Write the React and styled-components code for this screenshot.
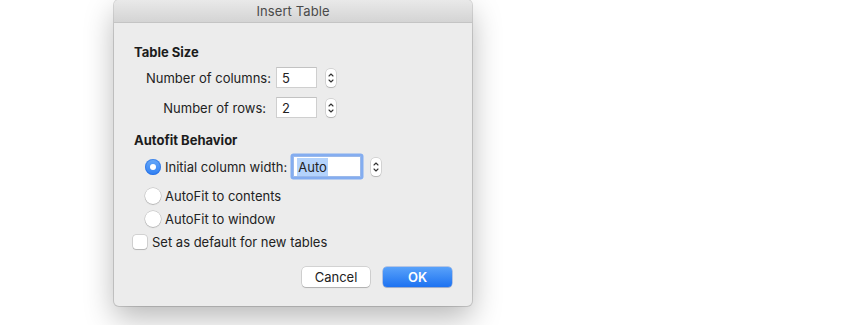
import React from "react";
import styled, { createGlobalStyle } from "styled-components";

const Global = createGlobalStyle`
  html, body { margin: 0; padding: 0; background: #fff; }
  body { font-family: "Inter", "Liberation Sans", sans-serif; -webkit-font-smoothing: antialiased; }
`;

const Page = styled.div`
  width: 850px;
  height: 325px;
  overflow: hidden;
  padding-left: 114px;
  box-sizing: border-box;
`;

const Dialog = styled.div`
  width: 358px;
  height: 306px;
  background: #ececec;
  border-radius: 5px;
  box-shadow: 0 0 0 1px rgba(0, 0, 0, 0.14), 0 12px 30px rgba(0, 0, 0, 0.28);
  display: flex;
  flex-direction: column;
  overflow: hidden;
  font-size: 13px;
  color: #222;
`;

const TitleBar = styled.div`
  height: 22px;
  flex: none;
  border-bottom: 1px solid #c4c4c4;
  background: linear-gradient(#e9e9e9, #d4d4d4);
  display: flex;
  align-items: center;
  justify-content: center;
  color: #4a4a4a;
  font-size: 13px;
  letter-spacing: 0.1px;
`;

const Body = styled.div`
  flex: 1;
  display: flex;
  flex-direction: column;
  padding: 0 20px;
`;

const Heading = styled.div`
  font-weight: 700;
  line-height: 16px;
  margin-top: ${(p) => p.$top}px;
  color: #1c1c1c;
`;

const FieldRow = styled.div`
  display: flex;
  align-items: center;
  height: 21px;
  margin-top: ${(p) => p.$top}px;
  margin-left: 12px;
`;

const FieldLabel = styled.div`
  width: 120px;
  text-align: right;
  margin-right: 10px;
  white-space: nowrap;
`;

const NumInput = styled.div`
  width: 41px;
  height: 21px;
  box-sizing: border-box;
  background: #fff;
  border: 1px solid #cfcfcf;
  border-top-color: #c2c2c2;
  padding-left: 5px;
  display: flex;
  align-items: center;
  margin-right: 9px;
`;

const Stepper = styled.div`
  width: 10px;
  height: 18px;
  background: #fff;
  border-radius: 4px;
  box-shadow: 0 0 0 0.5px rgba(0, 0, 0, 0.2), 0 1px 1px rgba(0, 0, 0, 0.15);
  display: flex;
  align-items: center;
  justify-content: center;
`;

const Options = styled.div`
  display: flex;
  flex-direction: column;
  margin-top: 6px;
`;

const OptionRow = styled.div`
  display: flex;
  align-items: center;
  height: ${(p) => (p.$tall ? 25 : 23)}px;
  margin-bottom: ${(p) => (p.$tall ? 5 : 0)}px;
  margin-left: ${(p) => p.$indent}px;
`;

const Radio = styled.div`
  width: 16px;
  height: 16px;
  border-radius: 50%;
  box-sizing: border-box;
  margin-right: 4px;
  flex: none;
  display: flex;
  align-items: center;
  justify-content: center;
  background: ${(p) => (p.$on ? "linear-gradient(#68aaf9, #2f7ff3)" : "#fff")};
  box-shadow: ${(p) =>
    p.$on
      ? "inset 0 0 0 1px rgba(30,100,220,0.5)"
      : "0 0 0 0.5px rgba(0,0,0,0.22), 0 1px 1px rgba(0,0,0,0.14)"};
  &::after {
    content: "";
    display: ${(p) => (p.$on ? "block" : "none")};
    width: 6px;
    height: 6px;
    border-radius: 50%;
    background: #fff;
  }
`;

const Check = styled.div`
  width: 14px;
  height: 14px;
  border-radius: 3px;
  background: #fff;
  box-sizing: border-box;
  margin-right: 5px;
  flex: none;
  box-shadow: 0 0 0 0.5px rgba(0, 0, 0, 0.22), 0 1px 1px rgba(0, 0, 0, 0.14);
`;

const AutoInput = styled.div`
  width: 68px;
  height: 21px;
  box-sizing: border-box;
  margin-left: 6px;
  margin-right: 10px;
  background: #fff;
  border: 1px solid #9bb9ea;
  box-shadow: 0 0 0 2.5px #84adf0;
  border-radius: 1px;
  display: flex;
  align-items: center;
  padding-left: 3px;
`;

const Selected = styled.span`
  background: #b4d3fc;
  padding: 1px 1px;
`;

const Buttons = styled.div`
  display: flex;
  justify-content: flex-end;
  gap: 13px;
  margin-top: auto;
  margin-bottom: 19px;
`;

const Button = styled.div`
  height: 20px;
  width: ${(p) => p.$w}px;
  box-sizing: border-box;
  border-radius: 4px;
  display: flex;
  align-items: center;
  justify-content: center;
  font-size: 13px;
  ${(p) =>
    p.$primary
      ? `
    background: linear-gradient(#59a2fa, #1d72f1);
    color: #fff;
    font-weight: 600;
    box-shadow: 0 0 0 0.5px rgba(20,80,200,0.5), 0 1px 1px rgba(0,0,0,0.15);
  `
      : `
    background: #fff;
    color: #222;
    box-shadow: 0 0 0 0.5px rgba(0,0,0,0.22), 0 1px 1px rgba(0,0,0,0.16);
  `}
`;

const StepIcon = () => (
  <svg width="8" height="14" viewBox="0 0 8 14">
    <path d="M2 5 L4 3 L6 5" fill="none" stroke="#333" strokeWidth="1.1" strokeLinecap="round" strokeLinejoin="round" />
    <path d="M2 9 L4 11 L6 9" fill="none" stroke="#333" strokeWidth="1.1" strokeLinecap="round" strokeLinejoin="round" />
  </svg>
);

export default function App() {
  return (
    <Page>
      <Global />
      <Dialog>
        <TitleBar>Insert Table</TitleBar>
        <Body>
          <Heading $top={21}>Table Size</Heading>
          <FieldRow $top={7}>
            <FieldLabel>Number of columns:</FieldLabel>
            <NumInput>5</NumInput>
            <Stepper><StepIcon /></Stepper>
          </FieldRow>
          <FieldRow $top={9}>
            <FieldLabel>Number of rows:</FieldLabel>
            <NumInput>2</NumInput>
            <Stepper><StepIcon /></Stepper>
          </FieldRow>
          <Heading $top={14}>Autofit Behavior</Heading>
          <Options>
            <OptionRow $tall $indent={11}>
              <Radio $on />
              Initial column width:
              <AutoInput><Selected>Auto</Selected></AutoInput>
              <Stepper><StepIcon /></Stepper>
            </OptionRow>
            <OptionRow $indent={11}>
              <Radio />
              AutoFit to contents
            </OptionRow>
            <OptionRow $indent={11}>
              <Radio />
              AutoFit to window
            </OptionRow>
            <OptionRow $indent={-1}>
              <Check />
              Set as default for new tables
            </OptionRow>
          </Options>
          <Buttons>
            <Button $w={68}>Cancel</Button>
            <Button $w={69} $primary>OK</Button>
          </Buttons>
        </Body>
      </Dialog>
    </Page>
  );
}
